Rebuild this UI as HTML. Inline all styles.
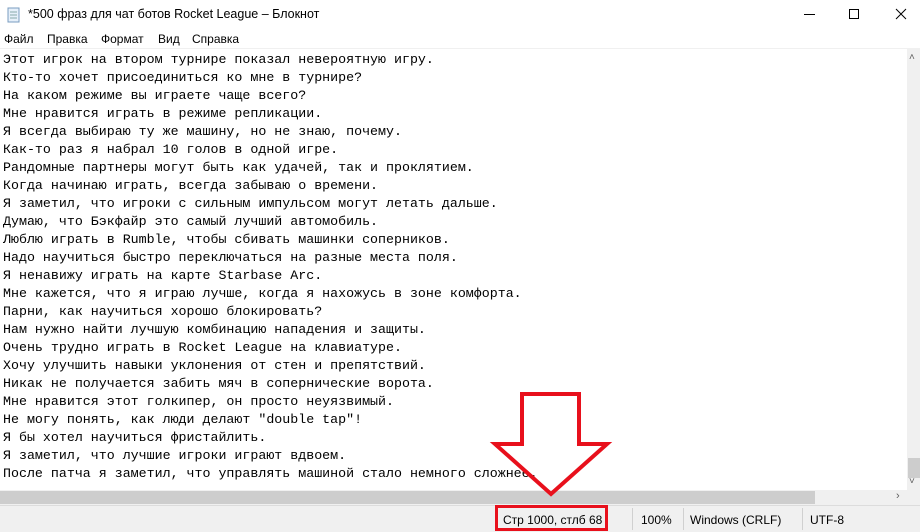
<!DOCTYPE html>
<html><head><meta charset="utf-8"><style>
*{margin:0;padding:0;box-sizing:border-box}
body{width:920px;height:532px;overflow:hidden;background:#fff;position:relative;font-family:"Segoe UI","Liberation Sans","Noto Sans CJK SC",sans-serif}
.t{position:absolute;font-size:12px;color:#000}
#txt{position:absolute;left:3px;top:51px;font-family:"Liberation Mono",monospace;font-size:13.3px;line-height:18px;white-space:pre;color:#000}
</style></head><body>
<svg style="position:absolute;left:6px;top:6px" width="16" height="18"><rect x="2" y="2" width="11" height="14" fill="#e6f0fa" stroke="#7a9cc0"/><line x1="4" y1="6" x2="11" y2="6" stroke="#8aa"/><line x1="4" y1="9" x2="11" y2="9" stroke="#8aa"/><line x1="4" y1="12" x2="11" y2="12" stroke="#8aa"/></svg>
<div class="t" style="left:28px;top:7px;font-size:12.5px">*500 фраз для чат ботов Rocket League – Блокнот</div>
<div style="position:absolute;left:804px;top:14px;width:11px;height:1px;background:#000"></div>
<div style="position:absolute;left:849px;top:9px;width:10px;height:10px;border:1px solid #000"></div>
<svg style="position:absolute;left:895px;top:8px" width="12" height="12"><path d="M1 1L11 11M11 1L1 11" stroke="#000" stroke-width="1"/></svg>
<div class="t" style="left:4px;top:32px">Файл</div>
<div class="t" style="left:47px;top:32px">Правка</div>
<div class="t" style="left:101px;top:32px">Формат</div>
<div class="t" style="left:158px;top:32px">Вид</div>
<div class="t" style="left:192px;top:32px">Справка</div>
<div style="position:absolute;left:0;top:48px;width:920px;height:1px;background:#f0f0f0"></div>
<div id="txt">Этот игрок на втором турнире показал невероятную игру.
Кто-то хочет присоединиться ко мне в турнире?
На каком режиме вы играете чаще всего?
Мне нравится играть в режиме репликации.
Я всегда выбираю ту же машину, но не знаю, почему.
Как-то раз я набрал 10 голов в одной игре.
Рандомные партнеры могут быть как удачей, так и проклятием.
Когда начинаю играть, всегда забываю о времени.
Я заметил, что игроки с сильным импульсом могут летать дальше.
Думаю, что Бэкфайр это самый лучший автомобиль.
Люблю играть в Rumble, чтобы сбивать машинки соперников.
Надо научиться быстро переключаться на разные места поля.
Я ненавижу играть на карте Starbase Arc.
Мне кажется, что я играю лучше, когда я нахожусь в зоне комфорта.
Парни, как научиться хорошо блокировать?
Нам нужно найти лучшую комбинацию нападения и защиты.
Очень трудно играть в Rocket League на клавиатуре.
Хочу улучшить навыки уклонения от стен и препятствий.
Никак не получается забить мяч в сопернические ворота.
Мне нравится этот голкипер, он просто неуязвимый.
Не могу понять, как люди делают "double tap"!
Я бы хотел научиться фристайлить.
Я заметил, что лучшие игроки играют вдвоем.
После патча я заметил, что управлять машиной стало немного сложнее.</div>
<div style="position:absolute;left:907px;top:48px;width:13px;height:442px;background:#f0f0f0"></div>
<div style="position:absolute;left:908px;top:458px;width:12px;height:20px;background:#cdcdcd"></div>
<div class="t" style="left:909px;top:52px;font-size:10px;color:#606060">˄</div>
<div class="t" style="left:909px;top:476px;font-size:10px;color:#606060">˅</div>
<div style="position:absolute;left:0;top:490px;width:907px;height:15px;background:#f0f0f0"></div>
<div style="position:absolute;left:0;top:491px;width:815px;height:13px;background:#cdcdcd"></div>
<div class="t" style="left:896px;top:490px;font-size:11px;color:#606060">›</div>
<div style="position:absolute;left:907px;top:490px;width:13px;height:15px;background:#f0f0f0"></div>
<div style="position:absolute;left:0;top:505px;width:920px;height:27px;background:#f0f0f0;border-top:1px solid #dcdcdc"></div>
<div style="position:absolute;left:632px;top:508px;width:1px;height:22px;background:#d0d0d0"></div>
<div style="position:absolute;left:683px;top:508px;width:1px;height:22px;background:#d0d0d0"></div>
<div style="position:absolute;left:802px;top:508px;width:1px;height:22px;background:#d0d0d0"></div>
<div class="t" style="left:503px;top:513px">Стр 1000, стлб 68</div>
<div class="t" style="left:641px;top:513px">100%</div>
<div class="t" style="left:690px;top:513px">Windows (CRLF)</div>
<div class="t" style="left:810px;top:513px">UTF-8</div>
<div style="position:absolute;left:495px;top:505px;width:113px;height:26px;border:3px solid #e8101c"></div>
<svg style="position:absolute;left:0;top:0" width="920" height="532"><path d="M522 394H579V444H607L551 494L495 444H522Z" fill="none" stroke="#e8101c" stroke-width="4" stroke-linejoin="miter"/></svg>
</body></html>
